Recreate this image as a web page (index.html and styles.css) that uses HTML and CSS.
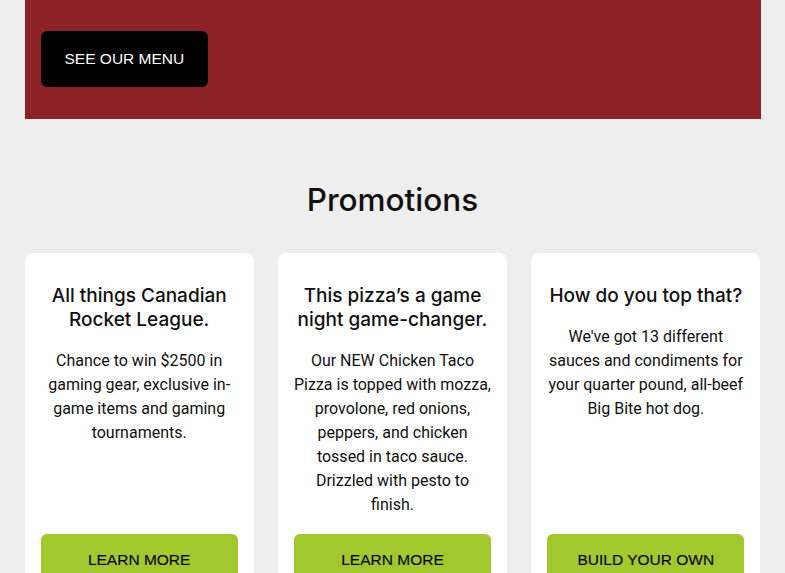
FILE: index.html
```html
<!DOCTYPE html>
<html lang="en">
<head>
<meta charset="utf-8">
<title>Promotions</title>
<link rel="stylesheet" href="styles.css">
</head>
<body>
<div class="page">
  <section class="hero">
    <a class="btn btn-dark" href="#">SEE OUR MENU</a>
  </section>
  <section class="promos">
    <h2 class="promos-title">Promotions</h2>
    <div class="cards">
      <article class="card">
        <h3 class="card-title">All things Canadian Rocket League.</h3>
        <p class="card-text">Chance to win $2500 in gaming gear, exclusive in-game items and gaming tournaments.</p>
        <a class="btn btn-green" href="#">LEARN MORE</a>
      </article>
      <article class="card">
        <h3 class="card-title">This pizza’s a game night game-changer.</h3>
        <p class="card-text">Our NEW Chicken Taco Pizza is topped with mozza, provolone, red onions, peppers, and chicken tossed in taco sauce. Drizzled with pesto to finish.</p>
        <a class="btn btn-green" href="#">LEARN MORE</a>
      </article>
      <article class="card">
        <h3 class="card-title">How do you top that?</h3>
        <p class="card-text">We've got 13 different sauces and condiments for your quarter pound, all-beef Big Bite hot dog.</p>
        <a class="btn btn-green" href="#">BUILD YOUR OWN</a>
      </article>
    </div>
  </section>
</div>
</body>
</html>
```
FILE: styles.css
```css
* { box-sizing: border-box; }
html, body { margin: 0; padding: 0; }
body {
  background: #eeeeee;
  font-family: Inter, "Noto Sans", sans-serif;
  color: #111111;
}
.page {
  width: 736px;
  margin: 0 auto;
}
.hero {
  background: #8d2128;
  padding: 31px 16px 32px;
}
.btn {
  display: block;
  font-family: "Liberation Sans", Arial, sans-serif;
  font-size: 15.5px;
  text-decoration: none;
  text-align: center;
  border-radius: 6px;
}
.btn-dark {
  display: inline-block;
  background: #000000;
  color: #ffffff;
  padding: 0 24px;
  line-height: 56px;
}
.promos {
  padding-top: 63px;
}
.promos-title {
  margin: 0 0 35px;
  text-align: center;
  font-size: 31.5px;
  line-height: 36px;
  font-weight: 500;
}
.cards {
  display: grid;
  grid-template-columns: repeat(3, 1fr);
  gap: 24px;
}
.card {
  background: #ffffff;
  border-radius: 8px;
  padding: 31px 16px 0;
  display: flex;
  flex-direction: column;
  text-align: center;
}
.card-title {
  margin: 0 0 17px;
  font-size: 19px;
  line-height: 24px;
  font-weight: 500;
}
.card-text {
  margin: 0 0 17px;
  font-family: Roboto, "Noto Sans", sans-serif;
  font-size: 16px;
  line-height: 24px;
}
.btn-green {
  margin-top: auto;
  background: #a1c92d;
  color: #0a0a0a;
  line-height: 52px;
  -webkit-text-stroke: 0.2px #0a0a0a;
}
```
